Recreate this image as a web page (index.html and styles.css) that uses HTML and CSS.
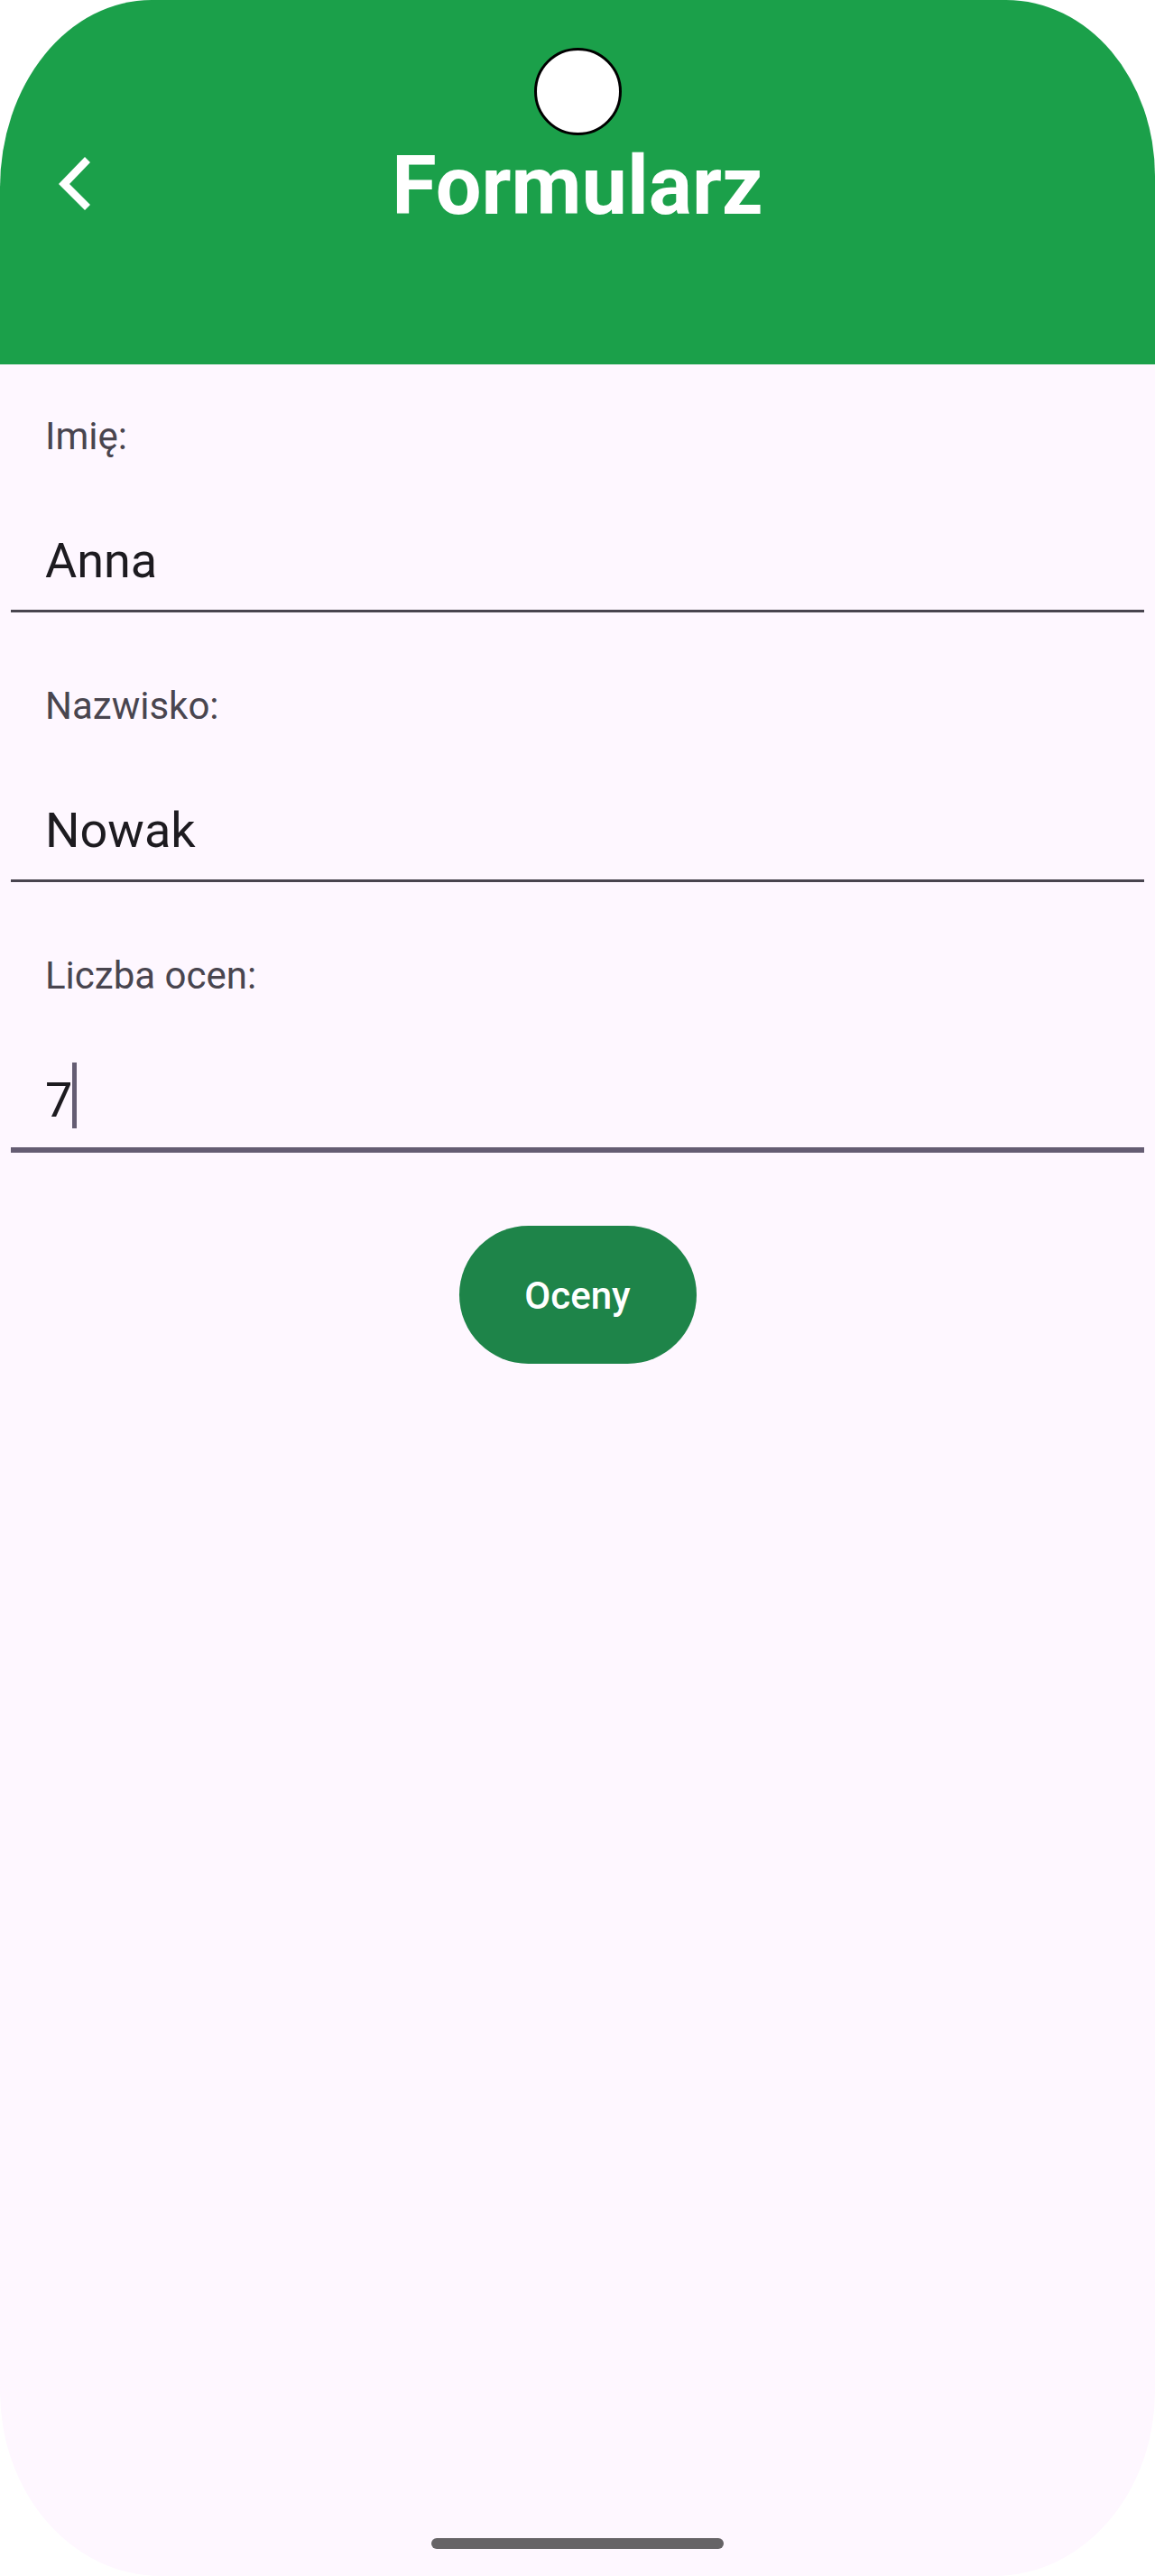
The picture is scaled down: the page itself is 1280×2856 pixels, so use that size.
FILE: index.html
```html
<!DOCTYPE html>
<html lang="pl">
<head>
<meta charset="utf-8">
<title>Formularz</title>
<link rel="stylesheet" href="styles.css">
</head>
<body>
<div class="screen">
  <div class="camera"></div>
  <header class="appbar">
    <div class="toolbar">
      <div class="back">
        <svg class="back-icon" width="45" height="68" viewBox="0 0 45 68" aria-hidden="true">
          <polygon points="34,4 5,34 34,63 40,57 17,34 40,10" fill="#ffffff"/>
        </svg>
      </div>
      <h1 class="title">Formularz</h1>
      <div class="spacer"></div>
    </div>
  </header>
  <main class="form">
    <div class="field first">
      <div class="label">Imię:</div>
      <div class="value">Anna</div>
    </div>
    <div class="field">
      <div class="label">Nazwisko:</div>
      <div class="value">Nowak</div>
    </div>
    <div class="field focused">
      <div class="label">Liczba ocen:</div>
      <div class="value">7<span class="caret"></span></div>
    </div>
    <div class="actions">
      <button class="btn" type="button">Oceny</button>
    </div>
  </main>
  <div class="home-bar"></div>
</div>
</body>
</html>
```

FILE: styles.css
```css
html, body {
  margin: 0;
  padding: 0;
  background: #ffffff;
}

body {
  font-family: Roboto, "Noto Sans", "Liberation Sans", sans-serif;
}

.screen {
  position: relative;
  width: 1280px;
  height: 2856px;
  background: #fef7ff;
  border-radius: 168px 165px 178px 178px / 208px 195px 205px 205px;
  overflow: hidden;
  display: flex;
  flex-direction: column;
}

.camera {
  position: absolute;
  left: 592px;
  top: 53px;
  width: 91px;
  height: 91px;
  border: 3px solid #000000;
  border-radius: 50%;
  background: #ffffff;
}

.appbar {
  background: #1ba04a;
  height: 404px;
  padding-top: 142px;
  box-sizing: border-box;
}

.toolbar {
  height: 130px;
  display: grid;
  grid-template-columns: 1fr auto 1fr;
  align-items: center;
}

.back {
  padding-left: 60px;
  display: flex;
  align-items: center;
}

.back-icon {
  display: block;
  margin-top: -6px;
}

.title {
  margin: 0;
  color: #ffffff;
  font-size: 90px;
  font-weight: 700;
  line-height: 130px;
  letter-spacing: 0;
}

.form {
  padding: 0 12px;
  flex: 1;
}

.field {
  padding: 79px 0 22.5px 38px;
  border-bottom: 3px solid #49454f;
}

.field.first {
  padding-top: 55px;
}

.field.focused {
  padding-bottom: 20.5px;
  border-bottom: 6px solid #655d73;
}

.label {
  font-size: 42px;
  line-height: 50px;
  color: #49454f;
}

.value {
  margin-top: 80.5px;
  font-size: 54px;
  line-height: 64px;
  color: #1d1b20;
}

.caret {
  display: inline-block;
  width: 5px;
  height: 73px;
  margin-top: -10px;
  margin-left: 0px;
  vertical-align: -13px;
  background: #655d73;
}

.actions {
  display: flex;
  justify-content: center;
  padding-top: 81px;
}

.btn {
  width: 263px;
  height: 153px;
  border: 0;
  border-radius: 77px;
  background: #1e8449;
  color: #ffffff;
  font-family: Roboto, "Noto Sans", sans-serif;
  font-size: 42px;
  font-weight: 500;
  padding: 2px 0 0 0;
  line-height: 49px;
}

.home-bar {
  align-self: center;
  width: 324px;
  height: 12px;
  border-radius: 6px;
  background: #666366;
  margin-bottom: 30px;
}
```
